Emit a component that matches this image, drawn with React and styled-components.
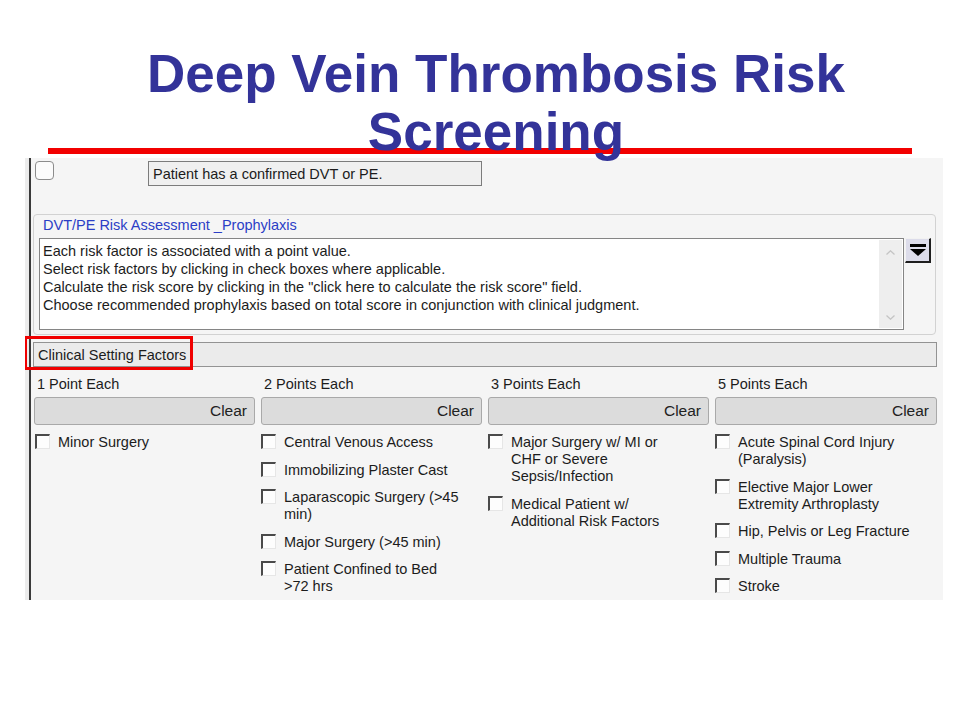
import styled, { createGlobalStyle } from 'styled-components';

const GlobalStyle = createGlobalStyle`
  html, body {
    margin: 0;
    padding: 0;
    background: #ffffff;
  }
  body {
    width: 960px;
    height: 720px;
    overflow: hidden;
    font-family: "Liberation Sans", Arial, sans-serif;
  }
`;

const Slide = styled.div`
  width: 960px;
  height: 720px;
  background: #ffffff;
`;

const Header = styled.header`
  margin: 0 48px;
  padding-top: 45px;
  height: 103px;
  border-bottom: 6px solid #f20000;
`;

const Title = styled.h1`
  margin: 0;
  padding-left: 32px;
  text-align: center;
  font-family: "Liberation Sans", Arial, sans-serif;
  font-weight: 700;
  font-size: 53px;
  line-height: 58px;
  color: #333399;
`;

const Panel = styled.div`
  margin: 4px 17px 0 25px;
  height: 442px;
  padding-left: 4px;
  background: #ececec;
  overflow: hidden;
`;

const Frame = styled.div`
  height: 100%;
  border-left: 2px solid #3a3a3a;
  background: #f5f5f5;
  font-size: 14.5px;
  color: #1c1c1c;
`;

const TopRow = styled.div`
  display: flex;
  align-items: flex-start;
  gap: 94px;
  padding: 3px 0 0 4px;
`;

const RoundCheck = styled.span`
  display: block;
  width: 17px;
  height: 17px;
  border: 1px solid #8c8c8c;
  border-radius: 4px;
  background: #fbfbfb;
`;

const ReadonlyField = styled.div`
  box-sizing: border-box;
  width: 334px;
  height: 25px;
  padding: 4px 4px 2px;
  border: 1px solid #7c7c7c;
  background: #f0f0f0;
  line-height: 17px;
`;

const GroupBox = styled.fieldset`
  box-sizing: border-box;
  margin: 28px 7px 0 2px;
  height: 121px;
  padding: 2px 4px 5px 5px;
  border: 1px solid #d2d2d2;
  border-radius: 4px;
  min-width: 0;
`;

const GroupLabel = styled.div`
  padding-left: 4px;
  line-height: 16px;
  color: #2b3ec6;
  margin-bottom: 5px;
`;

const GroupBody = styled.div`
  display: flex;
  align-items: flex-start;
  gap: 1px;
`;

const NoteArea = styled.div`
  box-sizing: border-box;
  flex: 1;
  height: 92px;
  display: flex;
  border: 1px solid #858585;
  background: #ffffff;
`;

const NoteText = styled.div`
  flex: 1;
  padding: 3px 3px;
  line-height: 18px;
`;

const ScrollTrack = styled.div`
  width: 23px;
  margin: 1px 1px 1px 0;
  background: #eeeeee;
  display: flex;
  flex-direction: column;
  justify-content: space-between;
  align-items: center;
  padding: 10px 0 8px;
  box-sizing: border-box;
`;

const DropButton = styled.div`
  box-sizing: border-box;
  width: 26px;
  height: 25px;
  display: flex;
  align-items: center;
  justify-content: center;
  background: #dcdcea;
  border-top: 1px solid #f2f2f2;
  border-left: 1px solid #f2f2f2;
  border-right: 2px solid #1e1e1e;
  border-bottom: 2px solid #1e1e1e;
`;

const SectionBar = styled.div`
  position: relative;
  box-sizing: border-box;
  margin: 7px 6px 0 2px;
  height: 25px;
  padding: 4px 4px 2px;
  border: 1px solid #939393;
  background: #ebebeb;
  line-height: 17px;
`;

const Highlight = styled.span`
  position: absolute;
  left: -10px;
  top: -7px;
  width: 169px;
  height: 34px;
  box-sizing: border-box;
  border: 3px solid #f00000;
`;

const Columns = styled.div`
  display: grid;
  grid-template-columns: repeat(4, 221px);
  column-gap: 6px;
  margin: 9px 0 0 3px;
`;

const Column = styled.div`
  display: flex;
  flex-direction: column;
`;

const ColumnTitle = styled.div`
  padding-left: 3px;
  line-height: 17px;
`;

const ClearButton = styled.button`
  box-sizing: border-box;
  margin-top: 4px;
  height: 28px;
  width: ${(p) => (p.$wide ? '222px' : '221px')};
  padding: 0 7px 0 0;
  text-align: right;
  font-family: "Liberation Sans", Arial, sans-serif;
  font-size: 15.5px;
  color: #222222;
  background: #dcdcdc;
  border: 1px solid #a9a9a9;
  border-radius: 3px;
`;

const FactorList = styled.ul`
  list-style: none;
  margin: 9px 0 0;
  padding: 0 0 0 ${(p) => p.$inset}px;
  display: flex;
  flex-direction: column;
  gap: 10.5px;
`;

const Factor = styled.li`
  display: flex;
  align-items: flex-start;
  gap: 8px;
  line-height: 17px;
`;

const SunkenBox = styled.span`
  flex: none;
  box-sizing: border-box;
  width: 15px;
  height: 15px;
  margin-top: 0;
  border-style: solid;
  border-width: 2px 1px 1px 2px;
  border-color: #4a4a4a #e6e6e6 #e6e6e6 #4a4a4a;
  background: #fdfdfd;
`;

const FactorLabel = styled.span`
  max-width: 178px;
`;

const Arrow = ({ up }) => (
  <svg width="9" height="5" viewBox="0 0 9 5">
    <path
      d={up ? 'M0.5 4.5 L4.5 0.8 L8.5 4.5' : 'M0.5 0.5 L4.5 4.2 L8.5 0.5'}
      fill="none"
      stroke="#c4c4c4"
      strokeWidth="1.3"
    />
  </svg>
);

const DropIcon = () => (
  <svg width="16" height="14" viewBox="0 0 16 14">
    <rect x="0" y="1" width="16" height="3" fill="#000" />
    <path d="M0 6 L16 6 L8 13 Z" fill="#000" />
  </svg>
);

const columns = [
  { title: '1 Point Each', inset: 1, items: ['Minor Surgery'] },
  {
    title: '2 Points Each',
    inset: 0,
    items: [
      'Central Venous Access',
      'Immobilizing Plaster Cast',
      'Laparascopic Surgery (>45 min)',
      'Major Surgery (>45 min)',
      'Patient Confined to Bed >72 hrs',
    ],
  },
  {
    title: '3 Points Each',
    inset: 0,
    items: [
      'Major Surgery w/ MI or CHF or Severe Sepsis/Infection',
      'Medical Patient w/ Additional Risk Factors',
    ],
  },
  {
    title: '5 Points Each',
    inset: 0,
    wide: true,
    items: [
      'Acute Spinal Cord Injury (Paralysis)',
      'Elective Major Lower Extremity Arthroplasty',
      'Hip, Pelvis or Leg Fracture',
      'Multiple Trauma',
      'Stroke',
    ],
  },
];

const notes = [
  'Each risk factor is associated with a point value.',
  'Select risk factors by clicking in check boxes where applicable.',
  'Calculate the risk score by clicking in the "click here to calculate the risk score" field.',
  'Choose recommended prophylaxis based on total score in conjunction with clinical judgment.',
];

const App = () => {
  return (
    <Slide>
      <GlobalStyle />
      <Header>
        <Title>
          Deep Vein Thrombosis Risk
          <br />
          Screening
        </Title>
      </Header>
      <Panel>
        <Frame>
          <TopRow>
            <RoundCheck />
            <ReadonlyField>Patient has a confirmed DVT or PE.</ReadonlyField>
          </TopRow>

          <GroupBox>
            <GroupLabel>DVT/PE Risk Assessment _Prophylaxis</GroupLabel>
            <GroupBody>
              <NoteArea>
                <NoteText>
                  {notes.map((line) => (
                    <div key={line}>{line}</div>
                  ))}
                </NoteText>
                <ScrollTrack>
                  <Arrow up />
                  <Arrow />
                </ScrollTrack>
              </NoteArea>
              <DropButton>
                <DropIcon />
              </DropButton>
            </GroupBody>
          </GroupBox>

          <SectionBar>
            Clinical Setting Factors
            <Highlight />
          </SectionBar>

          <Columns>
            {columns.map((col) => (
              <Column key={col.title}>
                <ColumnTitle>{col.title}</ColumnTitle>
                <ClearButton $wide={col.wide}>Clear</ClearButton>
                <FactorList $inset={col.inset}>
                  {col.items.map((item) => (
                    <Factor key={item}>
                      <SunkenBox />
                      <FactorLabel>{item}</FactorLabel>
                    </Factor>
                  ))}
                </FactorList>
              </Column>
            ))}
          </Columns>
        </Frame>
      </Panel>
    </Slide>
  );
};

export default App;
